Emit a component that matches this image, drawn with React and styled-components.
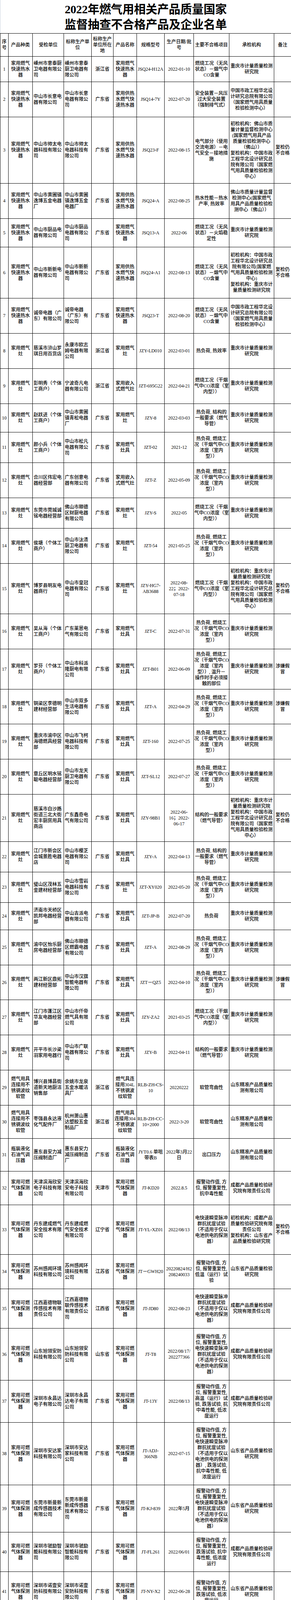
import React from 'react';
import styled, { createGlobalStyle } from 'styled-components';

const GlobalStyle = createGlobalStyle`
  html, body {
    margin: 0;
    padding: 0;
    background: #fff;
  }
  body {
    font-family: "Liberation Serif", "Noto Sans CJK SC", serif;
    color: #000;
  }
`;

const Page = styled.div`
  width: 746px;
  background: #fff;
`;

const Title = styled.h1`
  margin: 0;
  height: 85px;
  box-sizing: border-box;
  padding-top: 4px;
  border-left: 1px solid #c9d2de;
  font-family: "Liberation Serif", "Noto Sans CJK SC", serif;
  font-size: 30px;
  font-weight: 700;
  line-height: 39px;
  text-align: center;
  letter-spacing: -0.3px;
`;

const Sheet = styled.table`
  width: 746px;
  border-collapse: separate;
  border-spacing: 0;
  table-layout: fixed;
  border-top: 1px solid #000;
  border-left: 1px solid #000;
`;

const Col = styled.col`
  width: ${p => p.$w}px;
`;

const Row = styled.tr`
  height: ${p => p.$h}px;
`;

const HeadCell = styled.th`
  border-right: 1px solid #000;
  border-bottom: 1px solid #000;
  padding: 0 2px;
  font-size: 12px;
  font-weight: 500;
  line-height: 15px;
  text-align: center;
  vertical-align: middle;
`;

const Cell = styled.td`
  border-right: 1px solid #000;
  border-bottom: 1px solid #000;
  padding: 0 ${p => (p.$tight ? 1 : 2)}px;
  font-size: 12px;
  font-weight: 500;
  line-height: 15px;
  text-align: ${p => (p.$left ? 'left' : 'center')};
  vertical-align: middle;
  white-space: ${p => (p.$pre ? 'pre' : 'pre-line')};
  word-break: normal;
`;

const Footer = styled.div`
  display: grid;
  grid-template-columns: 21px 1fr;
  height: 49px;
  box-sizing: border-box;
  border-left: 1px solid #c9d2de;
  border-bottom: 1px solid #c9d2de;
`;

const FooterGutter = styled.div`
  border-right: 1px solid #c9d2de;
`;

const Notes = styled.div`
  padding: 9px 0 0 2px;
  font-size: 12px;
  font-weight: 500;
  line-height: 16px;
`;

const NoteLine = styled.div`
  padding-left: ${p => (p.$indent ? 24 : 0)}px;
  white-space: nowrap;
`;

const WIDTHS = [21, 62, 80, 71, 56, 60, 71, 75, 91, 115, 44];
const HEADS = ['序号', '产品种类', '受检单位', '标称生产单位', '标称生产单位所在地', '产品名称', '规格型号', '生产日期/批号', '主要不合格项目', '承检机构', '备注'];
const HEIGHTS = [65, 90, 170, 90, 73, 131, 90, 90, 90, 73, 78, 90, 78, 90, 129, 90, 103, 89, 90, 90, 121, 78, 78, 70, 90, 89, 90, 90, 90, 85, 84, 86, 127, 88, 101, 133, 108, 160, 121, 101, 102];

const HEATER = '家用燃气快速热水器';
const SUPPLY = '家用供热水燃气快速热水器';
const STOVE = '家用燃气灶';
const STOVES = '家用燃气灶具';
const HOSE = '燃气用具连接用不锈钢波纹软管';
const REG = '瓶装液化石油气调压器';
const DET = '家用可燃气体探测器';
const GD = '广东省';
const ZJ = '浙江省';

const CO_WIND = '燃烧工况（无风\n状态）－烟气中\nCO含量';
const HL_CO = '热负荷, 燃烧工\n况（干烟气中CO\n浓度（室内\n型））';
const CO_DRY = '燃烧工况（干烟\n气中CO浓度（室\n内型））';
const HL_PIPE = '热负荷, 结构的\n一般要求（燃气\n导管）';
const PIPE = '结构的一般要求\n（燃气导管）';
const EFT = '电快速瞬变脉冲\n群抗扰度试验\n（不适用于仅以\n电池供电的探测\n器）';
const ALARM = '报警动作值, 方\n位, 报警重复性,';

const CQ = '重庆市计量质量检测\n研究院';
const HB = '中国市政工程华北设\n计研究总院有限公司\n（国家燃气用具质量\n检验检测中心）';
const FS = '佛山市质量计量监督\n检测中心(国家燃气\n用具产品质量检验检\n测中心（佛山））';
const SD = '山东精准产品质量检\n测有限公司';
const CD = '成都产品质量检验研\n究院有限责任公司';
const SDS = '山东省产品质量检验\n研究院';
const LAB3 = '初检机构：佛山市质\n量计量监督检测中心\n(国家燃气用具产品\n质量检验检测中心\n（佛山））\n复检机构：中国市政\n工程华北设计研究总\n院有限公司（国家燃\n气用具质量检验检测\n中心）';
const LAB6 = '初检机构：中国市政\n工程华北设计研究总\n院有限公司(国家燃\n气用具质量检验检测\n中心)\n复检机构：重庆市计\n量质量检测研究院';
const LAB15 = '初检机构：重庆市计\n量质量检测研究院\n复检机构：中国市政\n工程华北设计研究总\n院有限公司（国家燃\n气用具质量检验检测\n中心）';
const LAB33 = '初检机构：成都产品\n质量检验研究院有限\n责任公司\n复检机构：山东省产\n品质量检验研究院';

const RECHECK = '复检仍不合格';
const FAKE = '涉嫌假冒';

// 产品种类, 受检单位, 标称生产单位, 所在地, 产品名称, 规格型号, 生产日期, 不合格项目, 承检机构, 备注
const ROWS = [
  [HEATER, '嵊州市意泰厨卫电器有限公司', '嵊州市意泰厨卫电器有限公司', ZJ, HEATER, 'JSQ24-H12A', '2022-01-10', CO_WIND, CQ, ''],
  [HEATER, '中山市长意电器有限公司', '中山市长意电器有限公司', GD, SUPPLY, 'JSQ14-7Y', '2022-07-20', '安全装置－风压\n过大安全装置\n（强制排气式）', HB, ''],
  [HEATER, '中山市帅太电器科技有限公司', '中山市帅太电器科技有限公司', GD, SUPPLY, 'JSQ23-F', '2022-08-15', '电气部分（使用\n交流电源）－电\n气安全－接地措\n施', LAB3, RECHECK],
  [HEATER, '中山市黄圃镇逸博五金电器厂', '中山市黄圃镇逸博五金电器厂', GD, SUPPLY, 'JSQ24-A', '2022-08-25', '热水性能－热水\n产率, 热效率', FS, ''],
  [HEATER, '中山市厨品电器有限公司', '中山市厨品电器有限公司', GD, HEATER, 'JSQ13-A', '2022-06', '燃烧工况（无风\n状态）－火焰稳\n定性', CQ, ''],
  [HEATER, '中山市新新电器有限公司', '中山市新新电器有限公司', GD, SUPPLY, 'JSQ24-A1', '2022-08-13', CO_WIND, LAB6, RECHECK],
  [HEATER, '诚帝电器（广东）有限公司', '诚帝电器（广东）有限公司', GD, HEATER, 'JSQ23-T', '2022-08-20', CO_WIND, HB, ''],
  [STOVE, '慈溪市浒山罗琪日用百货店', '永康市欧志姆电器有限公司', ZJ, STOVE, 'JZY-LD010', '2022-03-01', '热负荷, 热效率', CQ, ''],
  [STOVE, '彭明秀（个体工商户）', '宁波奇凡电器有限公司', ZJ, '家用嵌入式燃气灶', 'JZT-695G22', '2022-04-21', CO_DRY, CQ, ''],
  [STOVE, '赵跃进（个体工商户）', '中山市黄圃镇青松电器厂', GD, STOVE, 'JZY-8', '2022-03-03', HL_PIPE, CQ, ''],
  [STOVE, '颜小兵（个体工商户）', '中山市松凡电器有限公司', GD, STOVES, 'JZT-02', '2021-12', HL_CO, CQ, ''],
  [STOVE, '合川区伟宏电器经营部', '广东创意电器有限公司', GD, '家用嵌入式燃气灶', 'JZT-Z', '2022-05-09', HL_CO, CQ, ''],
  [STOVE, '东莞市莞城诚铭电器经营部', '佛山市顺德区财厨电器有限公司', GD, STOVE, 'JZY-S', '2022-05', CO_DRY, CQ, ''],
  [STOVE, '侯塘（个体工商户）', '中山市汰渍厨卫电器有限公司', GD, STOVE, 'JZT-54', '2021-05-25', HL_CO, CQ, ''],
  [STOVE, '博罗县明友电器商行', '中山市皇冠电器有限公司', GD, STOVE, 'JZY-HG7-\nAB3688', '2022-08-\n22；2022-\n07-18', CO_DRY, LAB15, RECHECK],
  [STOVE, '吴从海（个体工商户）', '广东莱恩电气有限公司', GD, STOVES, 'JZT-C', '2022-07-31', HL_CO, CQ, ''],
  [STOVE, '罗芬（个体工商户）', '中山市科派隆厨电有限公司', GD, STOVES, 'JZT-B01', '2022-06-09', HL_CO + ', 温升－\n操作时手必须接\n触的部位', CQ, FAKE],
  [STOVE, '铜梁区李德明建材经营部', '中山市双多生活电器有限公司', GD, STOVES, 'JZT-A', '2022-04-29', HL_CO, CQ, FAKE],
  [STOVE, '重庆市渝中区海德燃具经营部', '中山市飞柯电器科技有限公司', GD, STOVES, 'JZT-160', '2022-07-25', HL_CO, CQ, ''],
  [STOVE, '章丘区明水铭聪电器经营部', '中山市龙天厨卫电器有限公司', GD, STOVES, 'JZT-SL12', '2022-07-27', HL_CO, CQ, ''],
  [STOVE, '慈溪市白沙路街道三北大街宏丰厨房用具商店', '广东鑫奇电气有限公司', GD, STOVES, 'JZY-98B1', '2022-06-\n16；2022-\n06-17', PIPE, LAB15, RECHECK],
  [STOVE, '江门市新会区会城景胜电器店', '中山市樱芝电器有限公司', GD, STOVES, 'JZY-A', '2022-04-13', HL_PIPE, CQ, ''],
  [STOVE, '璧山区茂林五金建材经营部', '中山市雪岩电器科技有限公司', GD, STOVE, 'JZT-XY020', '2022-05-20', HL_CO, CQ, ''],
  [STOVE, '济南市天桥区凯邦电器经营部', '中山吉派电器有限公司', GD, STOVES, 'JZT-JP-B', '2022-07-20', '热负荷', CQ, ''],
  [STOVE, '渝中区怡乐厨房电器经营部', '佛山市顺德区燃霸电器有限公司', GD, STOVES, 'JZT-A', '2022-08-29', HL_CO, CQ, ''],
  [STOVE, '两江新区鼎拓建材经营部', '中山市汉旗智能电器有限公司', GD, STOVES, 'JZT－QZ5', '2022-04-10', HL_CO, CQ, FAKE],
  [STOVE, '江门市蓬江区华友电器经营部', '中山市仟帝燃气具有限公司', GD, STOVES, 'JZY-ZA2', '2021-03-25', CO_DRY, CQ, ''],
  [STOVE, '开平市长沙梁羽家用电器行', '中山市广联电器有限公司', GD, STOVES, 'JZY-B', '2022-04-11', PIPE, CQ, ''],
  [HOSE, '博兴县博昌街道新天地厨洁销售部', '余姚市龙泉五金水暖洁具厂', ZJ, '燃气具连接用304L不锈钢波纹软管', 'RLB-ZH-CS-\n10', '20220222', '软管弯曲性', SD, ''],
  [HOSE, '枣强县永达液化气配件厂', '杭州萧山惠达塑胶五金制品厂', ZJ, '燃气用具连接用304不锈钢波纹软管', 'RLB-ZH-CC-\n10×2000', '2022-3-20', '软管弯曲性', SD, ''],
  [REG, '惠东县安力减压阀制造厂', '惠东县安力减压阀制造厂', GD, REG, 'JYT0.6 单咀\n带表B', '2022年3月22\n日', '出口压力', SD, ''],
  [DET, '天津滨海欣安电子科技有限公司', '天津滨海欣安电子科技有限公司', '天津市', DET, 'JT-KD20', '2022.8.5', ALARM + '\n抗中毒性能', CD, ''],
  [DET, '丹东建成燃气安全技术有限公司', '丹东建成燃气安全技术有限公司', '辽宁省', DET, 'JT-YL-XZ01', '2022/08/13', EFT, LAB33, RECHECK],
  [DET, '苏州感闻环境科技有限公司', '苏州感闻环境科技有限公司', '江苏省', DET, 'JT－GWH20', '20220824/H2\n208240033', ALARM + '\n低温（运行）试\n验', SDS, ''],
  [DET, '江西嘉德物联传感技术有限责任公司', '江西嘉德物联传感技术有限责任公司', '江西省', DET, 'JT-JD80', '2022-08-23', EFT, CD, ''],
  [DET, '山东旭领安防科技有限公司', '山东旭领安防科技有限公司', '山东省', DET, 'JT-T8', '2022/08/17/\n202277366', ALARM + '\n' + EFT, CD, ''],
  [DET, '深圳市永昌达电子有限公司', '深圳市永昌达电子有限公司', GD, DET, 'JT-13Y', '2022/08/13', ALARM + '\n高温（运行）试\n验, 跌落试验, 抗\n中毒性能, 低浓\n度运行', CD, ''],
  [DET, '深圳市安达家科技有限公司', '深圳市安达家科技有限公司', GD, DET, 'JT-ADJ-\n366NB', '2022-07-15', ALARM + '\n电快速瞬变脉冲\n群抗扰度试验\n（不适用于仅以\n电池供电的探测\n器）, 跌落试验,\n抗中毒性能, 低\n浓度运行', SDS, ''],
  [DET, '东莞市新曼新成传感器技术有限公司', '东莞市新曼新成传感器技术有限公司', GD, DET, 'JT-KJ-839', '2022年5月', ALARM + '\n' + EFT, SDS, ''],
  [DET, '深圳市虢励智能科技有限公司', '深圳市虢励智能科技有限公司', GD, DET, 'JT-FL261', '2022/06/01', ALARM + '\n跌落试验, 抗中\n毒性能, 低浓度\n运行', CD, ''],
  [DET, '深圳市诺壹安防科技有限公司', '深圳市诺壹安防科技有限公司', GD, DET, 'JT-NY-X2', '2022-06-28', ALARM + '\n跌落试验, 低浓\n度运行', SDS, ''],
];

const App = () => (
  <Page>
    <GlobalStyle />
    <Title>
      2022年燃气用相关产品质量国家
      <br />
      监督抽查不合格产品及企业名单
    </Title>
    <Sheet>
      <colgroup>
        {WIDTHS.map((w, i) => (
          <Col key={i} $w={w} />
        ))}
      </colgroup>
      <thead>
        <Row $h={59}>
          {HEADS.map(h => (
            <HeadCell key={h}>{h}</HeadCell>
          ))}
        </Row>
      </thead>
      <tbody>
        {ROWS.map((r, i) => (
          <Row key={i} $h={HEIGHTS[i]}>
            <Cell $tight>{i + 1}</Cell>
            <Cell>{r[0]}</Cell>
            <Cell $left>{r[1]}</Cell>
            <Cell $left>{r[2]}</Cell>
            <Cell>{r[3]}</Cell>
            <Cell>{r[4]}</Cell>
            <Cell $tight>{r[5]}</Cell>
            <Cell>{r[6]}</Cell>
            <Cell $pre $tight>{r[7]}</Cell>
            <Cell $pre $tight>{r[8]}</Cell>
            <Cell>{r[9]}</Cell>
          </Row>
        ))}
      </tbody>
    </Sheet>
    <Footer>
      <FooterGutter />
      <Notes>
        <NoteLine>注：1.按产品及行政区域排序。</NoteLine>
        <NoteLine $indent>2.复检仍不合格，指产品初检不合格，企业提出复检申请，经复检产品仍不合格。</NoteLine>
      </Notes>
    </Footer>
  </Page>
);

export default App;
